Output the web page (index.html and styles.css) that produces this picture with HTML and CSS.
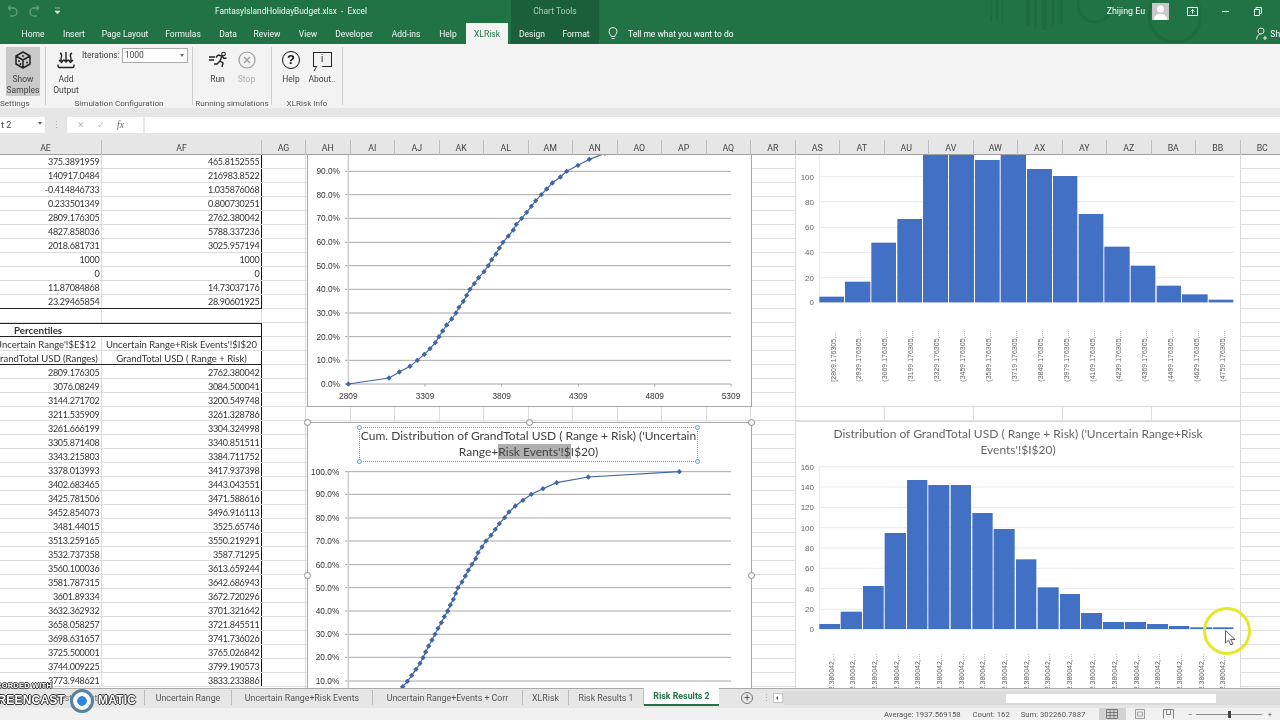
FILE: index.html
```html
<!DOCTYPE html>
<html lang="en">
<head>
<meta charset="utf-8">
<title>FantasyIslandHolidayBudget.xlsx - Excel</title>
<link rel="stylesheet" href="styles.css">
</head>
<body>
<div class="app">
  <header class="titlebar">
    <svg class="title-art" width="300" height="44" viewBox="0 0 300 44"><g fill="#1b6539" opacity=".55"><rect x="0" y="0" width="2" height="22"/><rect x="6" y="0" width="2" height="20"/><rect x="12" y="0" width="1" height="24"/><rect x="36" y="0" width="4" height="26"/><rect x="44" y="0" width="3" height="28"/><rect x="52" y="0" width="5" height="30"/><rect x="62" y="0" width="2" height="26"/><rect x="70" y="0" width="3" height="24"/></g><g fill="none" stroke="#1b6539" stroke-width="3" opacity=".5"><circle cx="105" cy="5" r="17"/><circle cx="185" cy="16" r="26"/></g></svg>
    <div class="qat">
      <svg width="14" height="12" viewBox="0 0 14 12"><path d="M3 3h5a3.5 3.5 0 0 1 0 8H5M3 3l2.500-2.500M3 3l2.500 2.500" fill="none" stroke="#5fa07c" stroke-width="1.300"/></svg>
      <svg width="14" height="12" viewBox="0 0 14 12"><path d="M11 3H6a3.500 3.500 0 0 0 0 8h3M11 3L8.500.5M11 3L8.500 5.500" fill="none" stroke="#5fa07c" stroke-width="1.300"/></svg>
      <svg width="7" height="8" viewBox="0 0 7 8"><path d="M1 1h5M1 4h5l-2.500 3z" fill="#d7e7dd" stroke="#d7e7dd" stroke-width=".6"/></svg>
    </div>
    <div class="doc-title">FantasyIslandHolidayBudget.xlsx&nbsp; -&nbsp; Excel</div>
    <div class="context-title">Chart Tools</div>
    <div class="account">
      <span class="user">Zhijing Eu</span>
      <span class="avatar"><svg width="17" height="17" viewBox="0 0 17 17"><circle cx="8.500" cy="6" r="3.500" fill="#fff"/><path d="M2 17c0-5 3-6 6.500-6s6.500 1 6.500 6z" fill="#fff"/></svg></span>
      <svg class="win first" width="11" height="9" viewBox="0 0 11 9"><path d="M.5.5h10v8H.5z" fill="none" stroke="#fff"/><path d="M5.500 6.500v-4M3.500 4.500l2-2 2 2" fill="none" stroke="#fff"/></svg>
      <svg class="win" width="8" height="9" viewBox="0 0 8 9"><path d="M0 4.500h7" stroke="#fff"/></svg>
      <svg class="win" width="8" height="9" viewBox="0 0 8 9"><path d="M.5 2.500h5v6h-5zM2 2.500V.5h5.500v6H5.500" fill="none" stroke="#fff"/></svg>
    </div>
  </header>

  <nav class="tabs">
    <span class="tab">Home</span><span class="tab">Insert</span><span class="tab">Page Layout</span><span class="tab">Formulas</span><span class="tab">Data</span><span class="tab">Review</span><span class="tab">View</span><span class="tab">Developer</span><span class="tab">Add-ins</span><span class="tab">Help</span>
    <span class="tab active">XLRisk</span>
    <span class="tab ctx">Design</span><span class="tab ctx">Format</span>
    <span class="tell"><svg width="10" height="13" viewBox="0 0 10 13"><path d="M3.200 9.500C3 7.500 1 7 1 4.500a4 4 0 0 1 8 0c0 2.500-2 3-2.200 5zM3.500 11.500h3" fill="none" stroke="#fff" stroke-width=".9"/></svg>Tell me what you want to do</span>
    <span class="share"><svg width="11" height="13" viewBox="0 0 11 13"><circle cx="5" cy="4" r="3" fill="none" stroke="#fff" stroke-width=".9"/><path d="M.5 12.500C1 8.500 3 7 5 7M7 11h4M9 9v4" fill="none" stroke="#fff" stroke-width=".9"/></svg>Share</span>
  </nav>

  <section class="ribbon">
    <div class="group g-settings">
      <div class="group-body">
        <div class="rbtn pressed">
          <svg class="ricon" width="18" height="18" viewBox="0 0 18 18"><path d="M9 1l7 4v8l-7 4-7-4V5zM2 5l7 4 7-4M9 9v8" fill="none" stroke="#222" stroke-width="1.500" stroke-linejoin="round"/><g fill="#222"><circle cx="9" cy="5" r="1"/><circle cx="5" cy="10" r="1"/><circle cx="6.500" cy="13" r="1"/><circle cx="13" cy="11.500" r="1"/></g></svg>
          <span>Show</span><span>Samples</span>
        </div>
      </div>
      <div class="group-label settings-label">Settings</div>
    </div>
    <div class="group g-sim">
      <div class="group-body">
        <div class="rbtn add-btn">
          <svg class="ricon" width="22" height="18" viewBox="0 0 22 18"><path d="M11 1v10M8.500 8.500L11 11l2.500-2.500M5 2c2 1 2 3 1 5 0 1 0 3 .5 4M4 9l2.500 2.500L8.500 9M17 2c-2 1-2 3-1 5 0 1 0 3-.5 4M13.500 9l2 2.500L18 9M3 13.500v1.500c0 .8.500 1.500 1.500 1.500h13c1 0 1.500-.7 1.500-1.500v-1.500" fill="none" stroke="#222" stroke-width="1.400"/></svg>
          <span>Add</span><span>Output</span>
        </div>
        <div class="iterations">
          <span>Iterations:</span>
          <div class="combo"><span>1000</span><i class="caret"></i></div>
        </div>
      </div>
      <div class="group-label">Simulation Configuration</div>
    </div>
    <div class="group g-run">
      <div class="group-body">
        <div class="rbtn">
          <svg class="ricon" width="20" height="18" viewBox="0 0 20 18"><circle cx="15.500" cy="3" r="1.800" fill="none" stroke="#222" stroke-width="1.100"/><path d="M1 6h6M1 9h5M10 4l4 1-2 5 3 2-1 4M12 10l-3 3H6M14 5l2 2.500 2.500-.5M10 4L8 6.500" fill="none" stroke="#222" stroke-width="1.400"/></svg>
          <span>Run</span>
        </div>
        <div class="rbtn disabled">
          <svg class="ricon" width="18" height="18" viewBox="0 0 18 18"><circle cx="9" cy="9" r="8" fill="none" stroke="#9b9b9b" stroke-width="1.200"/><path d="M6 6l6 6M12 6l-6 6" stroke="#9b9b9b" stroke-width="1.300"/></svg>
          <span>Stop</span>
        </div>
      </div>
      <div class="group-label">Running simulations</div>
    </div>
    <div class="group g-info">
      <div class="group-body">
        <div class="rbtn">
          <span class="help-icon">?</span>
          <span>Help</span>
        </div>
        <div class="rbtn">
          <span class="about-icon">i</span>
          <span>About..</span>
        </div>
      </div>
      <div class="group-label">XLRisk Info</div>
    </div>
  </section>

  <section class="formula-area">
    <div class="namebox">t 2<i class="caret"></i></div>
    <div class="fdots">⋮</div>
    <div class="fbuttons"><span class="fx-x">✕</span><span class="fx-c">✓</span><em>fx</em></div>
    <div class="finput"></div>
  </section>

  <div class="colheads">
    <span>AE</span><span>AF</span><span>AG</span><span>AH</span><span>AI</span><span>AJ</span><span>AK</span><span>AL</span><span>AM</span><span>AN</span><span>AO</span><span>AP</span><span>AQ</span><span>AR</span><span>AS</span><span>AT</span><span>AU</span><span>AV</span><span>AW</span><span>AX</span><span>AY</span><span>AZ</span><span>BA</span><span>BB</span><span>BC</span>
  </div>

  <main class="sheet">
    <div class="cells">
      <div class="row"><span>375.3891959</span><span class="r">465.8152555</span></div>
      <div class="row"><span>140917.0484</span><span class="r">216983.8522</span></div>
      <div class="row"><span>-0.414846733</span><span class="r">1.035876068</span></div>
      <div class="row"><span>0.233501349</span><span class="r">0.800730251</span></div>
      <div class="row"><span>2809.176305</span><span class="r">2762.380042</span></div>
      <div class="row"><span>4827.858036</span><span class="r">5788.337236</span></div>
      <div class="row"><span>2018.681731</span><span class="r">3025.957194</span></div>
      <div class="row"><span>1000</span><span class="r">1000</span></div>
      <div class="row"><span>0</span><span class="r">0</span></div>
      <div class="row"><span>11.87084868</span><span class="r">14.73037176</span></div>
      <div class="row end"><span>23.29465854</span><span class="r">28.90601925</span></div>
      <div class="row blank"><span></span><span></span></div>
      <div class="row pct"><span>Percentiles</span><span class="r"></span></div>
      <div class="row head"><span>Uncertain Range'!$E$12</span><span class="r">Uncertain Range+Risk Events'!$I$20</span></div>
      <div class="row head end"><span>GrandTotal USD (Ranges)</span><span class="r">GrandTotal USD ( Range + Risk)</span></div>
      <div class="row"><span>2809.176305</span><span class="r">2762.380042</span></div>
      <div class="row"><span>3076.08249</span><span class="r">3084.500041</span></div>
      <div class="row"><span>3144.271702</span><span class="r">3200.549748</span></div>
      <div class="row"><span>3211.535909</span><span class="r">3261.328786</span></div>
      <div class="row"><span>3261.666199</span><span class="r">3304.324998</span></div>
      <div class="row"><span>3305.871408</span><span class="r">3340.851511</span></div>
      <div class="row"><span>3343.215803</span><span class="r">3384.711752</span></div>
      <div class="row"><span>3378.013993</span><span class="r">3417.937398</span></div>
      <div class="row"><span>3402.683465</span><span class="r">3443.043551</span></div>
      <div class="row"><span>3425.781506</span><span class="r">3471.588616</span></div>
      <div class="row"><span>3452.854073</span><span class="r">3496.916113</span></div>
      <div class="row"><span>3481.44015</span><span class="r">3525.65746</span></div>
      <div class="row"><span>3513.259165</span><span class="r">3550.219291</span></div>
      <div class="row"><span>3532.737358</span><span class="r">3587.71295</span></div>
      <div class="row"><span>3560.100036</span><span class="r">3613.659244</span></div>
      <div class="row"><span>3581.787315</span><span class="r">3642.686943</span></div>
      <div class="row"><span>3601.89334</span><span class="r">3672.720296</span></div>
      <div class="row"><span>3632.362932</span><span class="r">3701.321642</span></div>
      <div class="row"><span>3658.058257</span><span class="r">3721.845511</span></div>
      <div class="row"><span>3698.631657</span><span class="r">3741.736026</span></div>
      <div class="row"><span>3725.500001</span><span class="r">3765.026842</span></div>
      <div class="row"><span>3744.009225</span><span class="r">3799.190573</span></div>
      <div class="row"><span>3773.948621</span><span class="r">3833.233886</span></div>
    </div>

    <div class="canvas">
      <!-- cumulative chart, ranges -->
      <div class="chart line-chart c1">
        <svg class="plot" width="443" height="252" viewBox="24 12 1329 756">
          <defs><marker id="dot" markerUnits="userSpaceOnUse" markerWidth="16" markerHeight="16" refX="8" refY="8"><path d="M8 0l8 8-8 8-8-8z" fill="#3f66a8"/></marker></defs>
          <g class="gl"><path d="M135 64H1293M135 134H1293M135 205H1293M135 277H1293M135 347H1293M135 418H1293M135 489H1293M135 560H1293M135 631H1293M135 702H1293"/><path d="M375 702v8M605 702v8M835 702v8M1064 702v8M1293 702v8"/></g>
          <path class="yaxis" d="M145 14V702"/>
          <polyline class="curve" points="145,702 267,684 298,666 330,649 352,631 373,613 390,596 406,578 417,560 428,543 440,525 455,507 468,489 477,472 490,454 500,436 510,418 523,401 536,383 552,365 565,347 575,329 588,312 598,294 609,277 625,258 640,240 649,223 665,205 680,187 694,169 707,152 724,134 740,117 757,99 781,81 800,64 834,46 868,28 915,10"/>
          <g class="pctl"><text x="120" y="73">90.0%</text><text x="120" y="143">80.0%</text><text x="120" y="214">70.0%</text><text x="120" y="286">60.0%</text><text x="120" y="356">50.0%</text><text x="120" y="427">40.0%</text><text x="120" y="498">30.0%</text><text x="120" y="569">20.0%</text><text x="120" y="640">10.0%</text><text x="120" y="711">0.0%</text></g>
          <g class="xl"><text x="145" y="746">2809</text><text x="375" y="746">3309</text><text x="605" y="746">3809</text><text x="835" y="746">4309</text><text x="1064" y="746">4809</text><text x="1293" y="746">5309</text></g>
        </svg>
      </div>

      <!-- selected cumulative chart -->
      <div class="chart line-chart c2">
        <svg class="plot" width="443" height="278" viewBox="24 39 1329 834">
          <g class="gl"><path d="M135 185H1293M135 253H1293M135 324H1293M135 393H1293M135 464H1293M135 533H1293M135 603H1293M135 673H1293M135 742H1293M135 813H1293"/></g>
          <path class="yaxis" d="M145 185V880"/>
          <polyline class="curve" points="290,845 308,830 322,814 335,796 348,778 360,760 369,743 377,726 386,708 396,690 405,673 414,655 424,638 433,620 443,603 451,585 460,568 467,550 474,533 486,516 496,498 505,481 516,463 527,446 534,428 546,411 558,393 573,376 586,358 598,341 614,323 627,306 646,288 669,271 694,253 729,236 770,218 865,201 1138,185"/>
          <g class="pctl"><text x="118" y="194">100.0%</text><text x="118" y="262">90.0%</text><text x="118" y="333">80.0%</text><text x="118" y="402">70.0%</text><text x="118" y="473">60.0%</text><text x="118" y="542">50.0%</text><text x="118" y="612">40.0%</text><text x="118" y="682">30.0%</text><text x="118" y="751">20.0%</text><text x="118" y="822">10.0%</text></g>
        </svg>
        <div class="title-box">Cum. Distribution of GrandTotal USD ( Range + Risk) ('Uncertain<br>Range+<mark>Risk Events'!$</mark>I$20)
          <i class="tb tl"></i><i class="tb tr"></i><i class="tb bl"></i><i class="tb br"></i>
        </div>
        <i class="handle h-tl"></i><i class="handle h-tc"></i><i class="handle h-tr"></i><i class="handle h-ml"></i><i class="handle h-mr"></i>
      </div>

      <!-- histogram, ranges -->
      <div class="chart hist c3">
        <svg class="plot" width="444" height="252" viewBox="18 12 1332 756">
          <g class="hgl"><path d="M88 80H1332M88 155H1332M88 232H1332M88 307H1332M88 383H1332M88 457H1332M88 15V457"/></g>
          <g class="bars">
            <rect x="88" y="440" width="74" height="17"/><rect x="165" y="395" width="76" height="62"/><rect x="244" y="278" width="74" height="179"/><rect x="322" y="207" width="74" height="250"/><rect x="399" y="5" width="75" height="452"/><rect x="477" y="5" width="75" height="452"/><rect x="555" y="30" width="74" height="427"/><rect x="632" y="5" width="76" height="452"/><rect x="711" y="57" width="75" height="400"/><rect x="789" y="78" width="73" height="379"/><rect x="866" y="192" width="74" height="265"/><rect x="943" y="290" width="76" height="167"/><rect x="1022" y="347" width="74" height="110"/><rect x="1100" y="407" width="73" height="50"/><rect x="1176" y="433" width="77" height="24"/><rect x="1256" y="449" width="74" height="8"/>
          </g>
          <g class="yl"><text x="72" y="89">100</text><text x="72" y="164">80</text><text x="72" y="241">60</text><text x="72" y="316">40</text><text x="72" y="392">20</text><text x="72" y="466">0</text></g>
          <g class="rot">
            <text transform="translate(137 695) rotate(-90)">[2809.176305,...</text><text transform="translate(214 695) rotate(-90)">(2939.176305,...</text><text transform="translate(292 695) rotate(-90)">(3069.176305,...</text><text transform="translate(370 695) rotate(-90)">(3199.176305,...</text><text transform="translate(447 695) rotate(-90)">(3329.176305,...</text><text transform="translate(525 695) rotate(-90)">(3459.176305,...</text><text transform="translate(603 695) rotate(-90)">(3589.176305,...</text><text transform="translate(681 695) rotate(-90)">(3719.176305,...</text><text transform="translate(759 695) rotate(-90)">(3849.176305,...</text><text transform="translate(837 695) rotate(-90)">(3979.176305,...</text><text transform="translate(915 695) rotate(-90)">(4109.176305,...</text><text transform="translate(992 695) rotate(-90)">(4239.176305,...</text><text transform="translate(1071 695) rotate(-90)">(4369.176305,...</text><text transform="translate(1149 695) rotate(-90)">(4499.176305,...</text><text transform="translate(1227 695) rotate(-90)">(4629.176305,...</text><text transform="translate(1305 695) rotate(-90)">(4759.176305,...</text>
          </g>
        </svg>
      </div>

      <!-- histogram, range + risk -->
      <div class="chart hist c4">
        <svg class="plot" width="444" height="278" viewBox="18 6 1332 834">
          <g class="hgl"><path d="M88 140H1332M88 201H1332M88 262H1332M88 323H1332M88 384H1332M88 445H1332M88 506H1332M88 568H1332M88 628H1332M88 140V628"/></g>
          <g class="bars">
            <rect x="88" y="612" width="62" height="15"/><rect x="152" y="575" width="64" height="52"/><rect x="219" y="498" width="62" height="129"/><rect x="284" y="339" width="64" height="288"/><rect x="351" y="180" width="61" height="447"/><rect x="415" y="195" width="63" height="432"/><rect x="482" y="195" width="61" height="432"/><rect x="547" y="279" width="61" height="348"/><rect x="611" y="327" width="63" height="300"/><rect x="678" y="418" width="61" height="209"/><rect x="743" y="502" width="63" height="125"/><rect x="810" y="522" width="60" height="105"/><rect x="873" y="579" width="63" height="48"/><rect x="939" y="606" width="63" height="21"/><rect x="1005" y="606" width="63" height="21"/><rect x="1071" y="612" width="63" height="15"/><rect x="1137" y="618" width="61" height="9"/><rect x="1201" y="622" width="65" height="5"/><rect x="1268" y="622" width="62" height="5"/>
          </g>
          <g class="yl"><text x="72" y="149">160</text><text x="72" y="210">140</text><text x="72" y="271">120</text><text x="72" y="332">100</text><text x="72" y="393">80</text><text x="72" y="454">60</text><text x="72" y="515">40</text><text x="72" y="577">20</text><text x="72" y="637">0</text></g>
          <g class="rot rot-end">
            <text transform="translate(131 700) rotate(-90)">[2762.380042,...</text><text transform="translate(196 700) rotate(-90)">(2922.380042,...</text><text transform="translate(261 700) rotate(-90)">(3082.380042,...</text><text transform="translate(326 700) rotate(-90)">(3242.380042,...</text><text transform="translate(391 700) rotate(-90)">(3402.380042,...</text><text transform="translate(456 700) rotate(-90)">(3562.380042,...</text><text transform="translate(521 700) rotate(-90)">(3722.380042,...</text><text transform="translate(586 700) rotate(-90)">(3882.380042,...</text><text transform="translate(651 700) rotate(-90)">(4042.380042,...</text><text transform="translate(716 700) rotate(-90)">(4202.380042,...</text><text transform="translate(781 700) rotate(-90)">(4362.380042,...</text><text transform="translate(846 700) rotate(-90)">(4522.380042,...</text><text transform="translate(914 700) rotate(-90)">(4682.380042,...</text><text transform="translate(981 700) rotate(-90)">(4842.380042,...</text><text transform="translate(1046 700) rotate(-90)">(5002.380042,...</text><text transform="translate(1111 700) rotate(-90)">(5162.380042,...</text><text transform="translate(1176 700) rotate(-90)">(5322.380042,...</text><text transform="translate(1241 700) rotate(-90)">(5482.380042,...</text><text transform="translate(1306 700) rotate(-90)">(5642.380042,...</text>
          </g>
        </svg>
        <div class="hist-title">Distribution of GrandTotal USD ( Range + Risk) ('Uncertain Range+Risk<br>Events'!$I$20)</div>
      </div>
    </div>
  </main>

  <footer class="sheetbar">
    <div class="sheet-tabs">
      <span class="stab">Best Worst Case</span><span class="stab">Uncertain Range</span><span class="stab">Uncertain Range+Risk Events</span><span class="stab">Uncertain Range+Events + Corr</span><span class="stab">XLRisk</span><span class="stab">Risk Results 1</span><span class="stab current">Risk Results 2</span>
    </div>
    <span class="add-sheet">+</span>
    <span class="sdots">⋮</span>
    <span class="scroll-left"></span>
    <div class="scroll-track"><div class="scroll-thumb"></div></div>
  </footer>

  <div class="status">
    <span class="st avg">Average: 1937.569158</span><span class="st cnt">Count: 162</span><span class="st sum">Sum: 302260.7887</span>
    <span class="view on"><svg width="12" height="10" viewBox="0 0 12 10"><path d="M.5.5h11v9H.5zM.5 3.500h11M.5 6.500h11M4 .5v9M8 .5v9" fill="none" stroke="#666" stroke-width=".8"/></svg></span>
    <span class="view"><svg width="10" height="10" viewBox="0 0 10 10"><path d="M.5.5h9v9h-9zM2.500 3h5v4h-5z" fill="none" stroke="#888" stroke-width=".8"/></svg></span>
    <span class="view"><svg width="11" height="10" viewBox="0 0 11 10"><path d="M.5 9.500V.5h10v9M3.500.5v5h4v-5" fill="none" stroke="#666" stroke-width=".8"/></svg></span>
    <span class="zoom-minus">−</span>
    <span class="slider"><i></i></span>
    <span class="zoom-plus">+</span>
  </div>

  <div class="watermark">
    <span class="wm-top">RECORDED WITH</span>
    <span class="wm-left">SCREENCAST</span>
    <span class="wm-logo"></span>
    <span class="wm-right">MATIC</span>
  </div>
  <div class="cursor-ring"></div>
  <svg class="cursor" width="11" height="16" viewBox="0 0 11 16"><path d="M.5.5V13l3-2.800L5.800 15l2.200-1-2.200-4.500H10z" fill="#fff" stroke="#333" stroke-width=".8"/></svg>
</div>
</body>
</html>
```
FILE: styles.css
```css
* { box-sizing: border-box; }
html, body { margin: 0; padding: 0; }
body { font-family: Roboto, "Liberation Sans", sans-serif; font-size: 8.5px; color: #444; background: #fff; }
i, em { font-style: normal; }
.app { position: relative; width: 1280px; height: 720px; overflow: hidden; display: flex; flex-direction: column; filter: blur(.35px); }

/* title bar */
.titlebar { position: relative; height: 22px; flex: none; background: #217346; color: #fff; display: flex; align-items: center; }
.title-art { position: absolute; left: 990px; top: 0; }
.qat { width: 215px; display: flex; align-items: center; padding-left: 5px; gap: 9px; flex: none; }
.qat svg:last-child { margin-left: 3px; }
.doc-title { width: 296px; flex: none; font-size: 8.300px; color: #f2f7f4; }
.context-title { width: 88px; height: 22px; line-height: 22px; flex: none; background: #1b5f3a; color: #a9cbb7; text-align: center; }
.account { position: relative; margin-left: auto; display: flex; align-items: center; padding-right: 18px; }
.user { font-size: 8.800px; margin-right: 7px; }
.avatar { width: 17px; height: 17px; background: #c8c8c8; display: block; }
.avatar svg { display: block; }
.win { margin-left: 24px; }
.win.first { margin-left: 18px; }

/* tabs */
.tabs { height: 22px; flex: none; background: #217346; color: #fff; display: grid; grid-template-columns: 13px 40px 42px 60px 56px 34px 44px 38px 54px 50px 34px 46px 42px 46px 155px 1fr; align-items: stretch; font-size: 8.500px; padding-top: 1px; }
.tab { display: flex; align-items: center; justify-content: center; color: #f0f6f2; }
.tab:first-child { grid-column: 2; }
.tab.active { background: #f3f3f3; color: #217346; margin: 0 3px 0 1px; }
.tab.ctx { background: #1b5f3a; margin-top: -1px; padding-top: 1px; }
.tab.ctx + .tell { grid-column: 15; }
.tell { display: flex; align-items: center; gap: 10px; padding-left: 9px; white-space: nowrap; }
.share { justify-self: end; display: flex; align-items: center; gap: 3px; white-space: nowrap; margin-right: -12px; }

/* ribbon */
.ribbon { height: 64px; flex: none; background: #f3f3f3; display: flex; padding-top: 3px; }
.group { display: flex; flex-direction: column; border-right: 1px solid #cfcfcf; margin-bottom: 3px; flex: none; }
.g-settings { width: 46px; }
.g-sim { width: 147px; }
.g-run { width: 79px; }
.g-info { width: 71px; }
.group-body { flex: 1; display: flex; min-height: 0; }
.group-label { height: 10px; line-height: 10px; margin-bottom: -3px; text-align: center; color: #555; font-size: 8.100px; white-space: nowrap; }
.settings-label { text-align: right; padding-right: 22px; }
.rbtn { width: 29px; display: flex; flex-direction: column; align-items: center; line-height: 11px; padding-top: 4px; color: #444; white-space: nowrap; }
.ricon { display: block; height: 18px; margin-bottom: 4.500px; }
.rbtn.pressed { width: 34px; height: 48.500px; margin-left: 6px; background: #c9c9c9; }
.rbtn.disabled { color: #b0b0b0; }
.add-btn { width: 36px; margin-left: 2px; }
.g-run .group-body { padding-left: 10px; }
.g-info .group-body { padding-left: 4px; gap: 1px; }
.g-info .rbtn { width: 30px; }
.help-icon { width: 18px; height: 18px; margin-bottom: 4.500px; border: 1.500px solid #111; border-radius: 50%; text-align: center; font: bold 13px/15px "Liberation Sans", sans-serif; color: #111; }
.about-icon { position: relative; width: 19px; height: 15px; margin: 1px 0 6.500px; border: 1.300px solid #222; text-align: center; font: 10px/12px "Liberation Sans", sans-serif; color: #222; }
.about-icon::after { content: ""; position: absolute; left: 1px; bottom: -5px; width: 5px; height: 5px; background: #f3f3f3; border-left: 1.300px solid #222; transform: skewX(-30deg); }
.iterations { display: flex; align-items: flex-start; gap: 2px; margin-left: -2px; padding-top: 1px; }
.combo { position: relative; width: 66px; height: 15px; background: #fff; border: 1px solid #ababab; line-height: 13px; padding-left: 2px; }
.iterations > span { line-height: 14px; }
.caret { position: absolute; right: 3px; top: 5px; width: 0; height: 0; border: 2px solid transparent; border-top: 3px solid #666; border-bottom: 0; }

/* formula */
.formula-area { height: 32px; flex: none; background: #e6e6e6; padding: 8.500px 0 7px; display: flex; }
.namebox { position: relative; width: 45px; background: #fff; padding-left: 1px; line-height: 17px; font-size: 9px; }
.fdots { width: 22px; text-align: center; line-height: 17px; color: #aaa; }
.fbuttons { width: 76px; background: #fff; display: flex; align-items: center; padding-left: 10px; gap: 12px; color: #bbb; }
.fbuttons em { font: italic 9.500px "Liberation Serif", serif; color: #666; }
.finput { flex: 1; background: #fff; margin-left: 2px; }

/* column heads */
.colheads { height: 15px; flex: none; background: #e6e6e6; border-bottom: 1px solid #9d9d9d; display: grid; grid-template-columns: 112px 160px 44px repeat(22, 44.500px); margin-left: -10px; }
.colheads span { border-right: 1px solid #bdbdbd; text-align: center; line-height: 16px; font-size: 8.800px; color: #444; }

/* sheet */
.sheet { flex: 1; min-height: 0; display: flex; overflow: hidden; background: #fff; }
.cells { width: 272px; flex: none; margin-left: -10px; font-family: Lato, "Liberation Sans", sans-serif; font-size: 9px; color: #333; letter-spacing: -.25px; }
.row { height: 14px; display: grid; grid-template-columns: 112px 160px; border-bottom: 1px solid #dcdcdc; line-height: 13px; }
.row.end ~ .row { line-height: 15px; }
.row span { text-align: right; padding-right: 1.500px; white-space: nowrap; border-right: 1px solid #dcdcdc; overflow: hidden; }
.row .r { border-right: 1.500px solid #111; }
.row.end { border-bottom: 1.500px solid #222; }
.row.blank span { border-right-color: #dcdcdc; }
.row.end ~ .row.pct { border-top: 1.500px solid #222; border-bottom: 1.500px solid #222; font-weight: 700; font-size: 9.800px; letter-spacing: 0; line-height: 12px; }
.row.pct span { text-align: left; padding-left: 24px; border-right-color: transparent; }
.row.pct .r { border-right-color: #111; }
.row.head { font-size: 9.500px; letter-spacing: 0; }
.row.head span { text-align: center; padding: 0; }

.canvas { position: relative; flex: 1; background-color: #fff; background-image: repeating-linear-gradient(to right, transparent 0 43.500px, #dedede 43.500px 44.500px), repeating-linear-gradient(to bottom, transparent 0 13px, #dedede 13px 14px); }

/* charts */
.chart { position: absolute; background: #fff; }
.plot { display: block; }
.line-chart { left: 45px; width: 445px; border: 1px solid #a8a8a8; }
.c1 { top: -2px; height: 254px; }
.c2 { top: 267px; height: 280px; }
.hist { left: 533px; width: 446px; border: 1px solid #dadada; }
.c3 { top: -2px; height: 254px; }
.c4 { top: 266px; height: 280px; }

.gl path { fill: none; stroke: #969696; stroke-width: 2.500; }
.yaxis { fill: none; stroke: #d0d0d0; stroke-width: 5; }
.curve { fill: none; stroke: #3f66a8; stroke-width: 3.500; marker-start: url(#dot); marker-mid: url(#dot); marker-end: url(#dot); }
.pctl text { font: 25px "Liberation Sans", sans-serif; fill: #333; text-anchor: end; }
.xl text { font: 25px "Liberation Sans", sans-serif; fill: #333; text-anchor: middle; }
.hgl path { fill: none; stroke: #e6e6e6; stroke-width: 2.500; }
.bars rect { fill: #4170c4; }
.yl text { font: 24px "Liberation Sans", sans-serif; fill: #666; text-anchor: end; }
.rot text { font: 21px "Liberation Sans", sans-serif; fill: #666; }
.rot-end text { text-anchor: end; }

.title-box { position: absolute; left: 51px; top: 4px; width: 339px; height: 35px; border: 1px dotted #8c8c8c; text-align: center; white-space: nowrap; font: 12px/16px Lato, "Liberation Sans", sans-serif; color: #404040; }
.title-box mark { background: #b0b0b0; color: #404040; }
.tb { position: absolute; width: 5px; height: 5px; border-radius: 50%; background: #fff; border: 1px solid #5fa8cc; }
.tl { left: -3px; top: -3px; } .tr { right: -3px; top: -3px; } .bl { left: -3px; bottom: -3px; } .br { right: -3px; bottom: -3px; }
.handle { position: absolute; width: 7px; height: 7px; border-radius: 50%; background: #fff; border: 1px solid #8a8a8a; }
.h-tl { left: -4px; top: -4px; } .h-tc { left: 218px; top: -4px; } .h-tr { right: -4px; top: -4px; } .h-ml { left: -4px; top: 149px; } .h-mr { right: -4px; top: 149px; }
.hist-title { position: absolute; left: 28px; top: 4px; width: 388px; text-align: center; white-space: nowrap; font: 12px/16px Lato, "Liberation Sans", sans-serif; color: #666; }

/* sheet tabs */
.sheetbar { height: 20px; flex: none; background: #e6e6e6; border-top: 1px solid #a9a9a9; display: flex; align-items: stretch; }
.sheet-tabs { display: grid; grid-template-columns: 145px 87px 141px 150px 46px 75px 75px; flex: none; font-size: 8.800px; }
.stab { display: flex; align-items: center; justify-content: center; border-right: 1px solid #bdbdbd; margin: 1px 0 3px; color: #555; white-space: nowrap; }
.stab:first-child { padding-left: 30px; color: #777; }
.stab.current { margin: -1px 0 2px; background: #fff; border: 0; border-bottom: 2px solid #217346; color: #217346; font-weight: 700; }
.add-sheet { width: 12px; height: 12px; margin: 3px 0 0 22px; border: 1px solid #777; border-radius: 50%; text-align: center; line-height: 9px; font-size: 10px; color: #555; flex: none; }
.sdots { width: 8px; margin-left: 9px; line-height: 18px; color: #aaa; }
.scroll-left { width: 10px; height: 10px; margin: 3.500px 0 0 3px; background: #fff; border: 1px solid #c4c4c4; flex: none; position: relative; }
.scroll-left::after { content: ""; position: absolute; left: 2px; top: 2px; border: 2px solid transparent; border-right: 2.500px solid #555; border-left: 0; }
.scroll-track { flex: 1; height: 14px; margin-top: 2px; background: #dcdcdc; padding: 2.500px 0 0 223px; }
.scroll-thumb { width: 210px; height: 9px; background: #fff; }

/* status bar */
.status { height: 12px; flex: none; background: #f1f1f1; display: flex; align-items: center; font-size: 7.700px; color: #555; white-space: nowrap; }
.st.avg { margin-left: 884px; }
.st.cnt { margin-left: 12px; }
.st.sum { margin-left: 11px; }
.view { width: 27px; height: 12px; margin-left: 1px; display: flex; align-items: center; justify-content: center; flex: none; }
.view.on { background: #d2d2d2; margin-left: auto; }
.zoom-minus { margin-left: 6px; width: 7px; }
.slider { position: relative; width: 66px; height: 1px; margin-left: 1px; background: #888; }
.slider i { position: absolute; left: 32px; top: -3px; width: 3px; height: 7px; background: #444; }
.zoom-plus { margin: 0 8px 0 6px; }

/* overlays */
.watermark { position: absolute; left: 0; top: 678px; width: 140px; height: 36px; font-family: "Liberation Sans", sans-serif; font-weight: 700; color: #fff; text-shadow: -1px 0 #333, 1px 0 #333, 0 -1px #333, 0 1px #333; }
.wm-top { position: absolute; right: 88px; top: 3px; font-size: 7.500px; white-space: nowrap; letter-spacing: .2px; }
.wm-left { position: absolute; right: 75px; top: 15px; font-size: 12px; letter-spacing: .2px; white-space: nowrap; }
.wm-right { position: absolute; left: 98px; top: 15px; font-size: 12px; letter-spacing: .2px; }
.wm-logo { position: absolute; left: 70px; top: 11px; width: 24px; height: 24px; border-radius: 50%; border: 3px solid #5a819e; background: radial-gradient(circle, #2f88d6 0 4.500px, #f4f8fb 5px); }
.cursor-ring { position: absolute; left: 1203px; top: 607px; width: 48px; height: 48px; border-radius: 50%; border: 3px solid #e6e62e; }
.cursor { position: absolute; left: 1225px; top: 630px; }
```
